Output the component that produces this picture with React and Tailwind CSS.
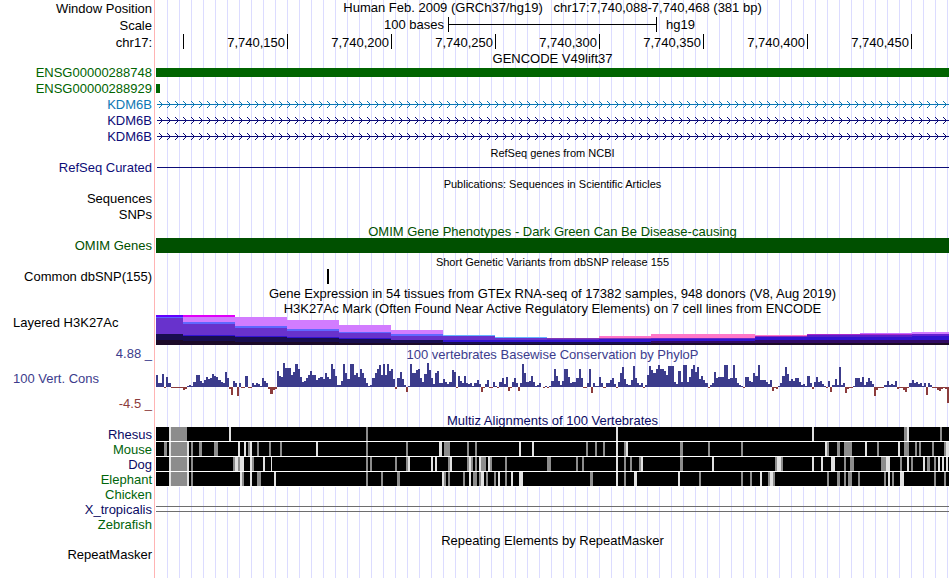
import React from 'react';
import clsx from 'clsx';

const GRID = 'bg-[repeating-linear-gradient(to_right,transparent_0_11px,#dcdcff_11px_12px)]';

const TICKS = ['7,740,150', '7,740,200', '7,740,250', '7,740,300', '7,740,350', '7,740,400', '7,740,450'];

// x start, x end, then [top, bottom, colour] bands
const H3K27AC = [
  [0, 27, [[0, 2, '#6200ff'], [2, 3, '#5c64ff'], [3, 19, '#6832cc'], [19, 25, '#190e50'], [25, 30, '#1c0a28']]],
  [27, 79, [[0, 2, '#e000f8'], [2, 7, '#d27cff'], [7, 9, '#5f68ff'], [9, 20, '#6832cc'], [20, 21, '#3214d0'], [21, 26, '#190e50'], [26, 30, '#1c0a28']]],
  [79, 131, [[2, 11, '#d27cff'], [11, 13, '#5f68ff'], [13, 21, '#6832cc'], [21, 22, '#3214d0'], [22, 27, '#190e50'], [27, 30, '#1c0a28']]],
  [131, 183, [[5, 14, '#d27cff'], [14, 16, '#5f68ff'], [16, 22, '#6832cc'], [22, 23, '#3214d0'], [23, 27, '#190e50'], [27, 30, '#1c0a28']]],
  [183, 235, [[10, 17, '#d27cff'], [17, 18, '#5f68ff'], [18, 23, '#6832cc'], [23, 24, '#3214d0'], [24, 28, '#190e50'], [28, 30, '#1c0a28']]],
  [235, 287, [[15, 19, '#d27cff'], [19, 21, '#5f68ff'], [21, 25, '#6832cc'], [25, 28, '#190e50'], [28, 30, '#1c0a28']]],
  [287, 339, [[20, 21, '#64b4ff'], [21, 25, '#6832cc'], [25, 27, '#3214d0'], [27, 29, '#190e50'], [29, 30, '#1c0a28']]],
  [339, 391, [[22, 23, '#64b4ff'], [23, 25, '#6832cc'], [25, 27, '#3214d0'], [27, 29, '#190e50'], [29, 30, '#1c0a28']]],
  [391, 443, [[23, 24, '#8238b4'], [24, 25, '#5a28c8'], [25, 27, '#3214d0'], [27, 29, '#190e50'], [29, 30, '#1c0a28']]],
  [443, 495, [[21, 23, '#ff78c8'], [23, 24, '#8238b4'], [24, 27, '#3214d0'], [27, 29, '#190e50'], [29, 30, '#1c0a28']]],
  [495, 599, [[19, 23, '#ff78c8'], [23, 24, '#6428c8'], [24, 26, '#3214d0'], [26, 28, '#320a64'], [28, 30, '#1c0a28']]],
  [599, 651, [[20, 21, '#ff78c8'], [21, 22, '#8c28be'], [22, 25, '#3214d0'], [25, 28, '#320a64'], [28, 30, '#1c0a28']]],
  [651, 704, [[19, 20, '#aa28c8'], [20, 22, '#5a1ec8'], [22, 25, '#3214d0'], [25, 28, '#320a64'], [28, 30, '#1c0a28']]],
  [704, 756, [[18, 19, '#c86eff'], [19, 20, '#aa28c8'], [20, 22, '#5a1ec8'], [22, 25, '#3214d0'], [25, 28, '#320a64'], [28, 30, '#1c0a28']]],
  [756, 793, [[17, 19, '#d27cff'], [19, 21, '#6420d0'], [21, 25, '#3214d0'], [25, 28, '#320a64'], [28, 30, '#1c0a28']]],
];

// one score per base, in pixels above or below the zero line
const PHYLOP = [
  12, 4, 4, 13, -1, 10, 4, -1, -1, -1, -1, -1, -1, -3, -2, 1, 2, 1, 5, 12,
  12, 6, 4, 7, 10, 8, 9, 13, 11, 10, 7, 5, 4, 15, 9, -2, -8, 6, 4, -9,
  4, -1, -1, 11, -1, -1, 4, 2, 4, 3, 1, 9, 6, 4, -2, -7, -3, -2, 16, 11,
  10, 24, 19, 19, 19, 12, 15, 23, 18, 10, 5, 6, 9, 12, 16, 12, 12, 7, 9, 10,
  8, 14, 10, 8, 23, 18, 11, 2, 2, 6, 23, 14, 8, 23, 23, 12, 14, 10, 18, 14,
  9, 4, 1, 2, 9, 14, 18, 22, 12, 23, 12, 23, 16, 18, 8, -2, 9, 15, 8, 2,
  -5, 1, 23, 14, 14, 17, 18, 9, 5, 13, 24, 17, 9, 3, 14, 16, 4, 4, 8, 5,
  3, 5, 17, 15, -1, 11, 6, 4, 11, 4, 3, 4, 1, 4, 7, 3, -5, -1, 3, 7,
  -1, -1, 5, 1, -1, 5, 9, 3, 10, -4, -1, 5, 9, 4, -4, 4, 23, 14, 5, 6,
  11, 5, 1, 2, 4, 0, -1, 1, -1, 1, 6, 18, 11, 6, 2, 6, 18, 18, 10, 4,
  5, 5, 9, 18, 9, -1, -1, 4, 18, -6, 4, 1, 1, 10, 4, -1, 4, 4, 7, 9,
  3, -1, 5, 14, 20, 8, 3, 2, 7, 21, 9, 4, 2, 4, -1, 2, 12, 21, 17, 14,
  18, 22, 18, 18, 16, 12, 21, 21, 21, 5, 3, 16, 5, 22, 22, 5, 10, 18, 22, 15,
  20, 8, 11, 7, 4, -1, 2, 4, 15, 9, 10, 10, 10, 22, 22, 8, 9, 22, 9, 4,
  2, 1, -1, 10, 10, 6, 5, 14, 11, 22, 7, 7, 7, 5, 3, 7, -4, -1, -2, 1,
  4, 11, 20, 13, 6, 8, 6, 9, 9, 5, 2, 3, 1, 11, 4, -2, 5, 10, 5, 6,
  3, 1, -1, 6, -5, 2, 8, 2, 20, 2, 4, -6, -2, -1, -1, 1, 9, 9, 5, 10,
  2, 5, 9, 6, 3, -9, -3, -1, -1, -1, 2, 6, 2, 3, 2, 6, -2, -1, -1, -3,
  -5, -1, 4, 7, 4, 5, 3, 4, 1, 4, -8, 4, 2, -1, -1, -3, -4, -2, -1, -2,
  -16,
];

const ALIGNMENTS = [
  {
    name: 'Rhesus',
    color: 'text-[#0a0a64]',
    light: [[13, 15], [73, 75], [460, 462], [656, 658], [751, 753]],
    gray: [[15, 31], [210, 212], [748, 751], [784, 786]],
  },
  {
    name: 'Mouse',
    color: 'text-[#00640a]',
    light: [[13, 15], [31, 33], [82, 84], [88, 90], [94, 96], [160, 162], [283, 286], [363, 365], [376, 378], [460, 462], [470, 472], [669, 671], [709, 711], [742, 744], [790, 793]],
    gray: [[8, 11], [15, 31], [35, 37], [43, 46], [58, 62], [92, 94], [101, 103], [113, 115], [124, 126], [210, 212], [250, 252], [288, 294], [311, 313], [319, 321], [430, 432], [439, 441], [447, 449], [468, 470], [524, 527], [552, 554], [585, 587], [671, 673], [681, 684], [688, 696], [721, 723], [748, 753], [759, 761], [763, 765], [776, 778], [788, 790]],
  },
  {
    name: 'Dog',
    color: 'text-[#0a0a64]',
    light: [[13, 15], [31, 33], [79, 82], [84, 88], [94, 96], [107, 109], [115, 116], [252, 254], [275, 277], [279, 281], [294, 296], [313, 315], [323, 325], [332, 334], [460, 462], [485, 487], [556, 558], [621, 625], [656, 658], [665, 667], [675, 679], [730, 734], [751, 753], [767, 769], [782, 784], [786, 788], [790, 792]],
    gray: [[15, 31], [35, 37], [77, 79], [82, 84], [96, 98], [210, 212], [214, 216], [239, 241], [250, 252], [292, 294], [311, 313], [315, 317], [319, 321], [325, 330], [334, 336], [349, 351], [391, 395], [420, 422], [426, 428], [468, 470], [474, 476], [483, 485], [524, 527], [619, 621], [625, 627], [688, 690], [694, 698], [725, 730], [744, 746], [755, 757], [771, 774], [778, 780]],
  },
  {
    name: 'Elephant',
    color: 'text-[#00640a]',
    light: [[13, 15], [31, 33], [84, 86], [94, 96], [118, 120], [286, 288], [313, 315], [325, 328], [342, 344], [355, 357], [363, 367], [460, 462], [478, 481], [522, 524], [604, 606], [614, 617], [732, 734], [744, 748]],
    gray: [[15, 31], [35, 37], [86, 88], [101, 105], [210, 212], [225, 227], [241, 244], [288, 290], [292, 294], [307, 309], [317, 321], [323, 325], [330, 332], [338, 340], [349, 351], [434, 437], [468, 470], [543, 545], [585, 587], [594, 596], [612, 614], [617, 619], [671, 673], [681, 684], [688, 690], [692, 696], [702, 704], [728, 730], [736, 738], [778, 780], [788, 790]],
  },
];

const Row = ({ label, height = 'h-4', labelClass = '', children }) => (
  <div className={clsx('flex', height)}>
    <div className={clsx('mr-px w-[155px] shrink-0 border-r border-[#ffb4b4] pr-[2px] text-right', labelClass)}>{label}</div>
    <div className={clsx('min-w-0 flex-1', GRID)}>{children}</div>
  </div>
);

const TitleRow = ({ title, height = 'h-[15px]', titleClass = '', ...rest }) => (
  <Row height={height} {...rest}>
    <h2 className={clsx('text-center whitespace-pre', titleClass)}>{title}</h2>
  </Row>
);

const Plot = ({ height, className, children }) => (
  <svg viewBox={`0 0 793 ${height}`} preserveAspectRatio="none" shapeRendering="crispEdges" className={clsx('block w-full', className)}>
    {children}
  </svg>
);

const ARROWS = Array.from({ length: 99 }, (_, i) => {
  const x = 3 + i * 8;
  return `M${x} 4h1v1h1v1h1v1h1v1h-1v1h-1v1h-1v1h-1v-1h1v-1h1v-1h1v-1h-1v-1h-1v-1h-1z`;
}).join('');

const GeneRow = ({ labelClass, color }) => (
  <Row label="KDM6B" labelClass={labelClass}>
    <Plot height={16} className="h-4">
      <path d={`M1 7h792v1h-792z${ARROWS}`} fill={color} />
    </Plot>
  </Row>
);

const bars = (sign) =>
  PHYLOP.map((v, i) => {
    if (v * sign <= 0) return '';
    const x0 = Math.round((i * 793) / 381);
    const x1 = Math.round(((i + 1) * 793) / 381);
    return v > 0 ? `M${x0} ${24 - v}H${x1}V24H${x0}z` : `M${x0} 24H${x1}V${24 - v}H${x0}z`;
  }).join('');

const blocks = (spans) => spans.map(([a, b]) => `M${a} 0H${b}V14H${a}z`).join('');

export default function App() {
  return (
    <main className="bg-white pr-px font-['Liberation_Sans',Arial,sans-serif] text-[13px] leading-[15px] text-black">
      <TitleRow label="Window Position" height="h-[17px]" labelClass="pt-px" title="Human Feb. 2009 (GRCh37/hg19)   chr17:7,740,088-7,740,468 (381 bp)" />
      <Row label="Scale" height="h-[17px]" labelClass="pt-px">
        <div className="grid grid-cols-[292fr_209fr_292fr]">
          <span className="pr-1 text-right">100 bases</span>
          <div className="flex h-[15px] items-center border-x border-black">
            <div className="h-px w-full bg-black" />
          </div>
          <span className="pl-[9px]">hg19</span>
        </div>
      </Row>
      <Row label="chr17:" height="h-[17px]" labelClass="pt-px">
        <div className="grid grid-cols-[28fr_repeat(7,104fr)_37fr]">
          <div className="h-[15px] border-r border-black" />
          {TICKS.map((tick) => (
            <div key={tick} className="h-[15px] border-r border-black pr-[2px] text-right leading-[17px]">{tick}</div>
          ))}
        </div>
      </Row>

      <TitleRow title="GENCODE V49lift37" height="h-[14px]" />
      <Row label="ENSG00000288748" labelClass="text-[#006400]">
        <div className="pt-[3px]"><div className="h-[9px] bg-[#006400]" /></div>
      </Row>
      <Row label="ENSG00000288929" labelClass="text-[#006400]">
        <div className="pt-[3px]"><div className="h-[9px] w-1 bg-[#006400]" /></div>
      </Row>
      <GeneRow labelClass="text-[#0c78b4]" color="#0c78b4" />
      <GeneRow labelClass="text-[#0c0c78]" color="#0c0c78" />
      <GeneRow labelClass="text-[#0c0c78]" color="#0c0c78" />

      <TitleRow title="RefSeq genes from NCBI" titleClass="text-[11px] leading-4" />
      <Row label="RefSeq Curated" height="h-[15px]" labelClass="text-[#0c0c78]">
        <div className="pt-[7px] pl-px"><div className="h-px bg-[#0c0c78]" /></div>
      </Row>

      <TitleRow title="Publications: Sequences in Scientific Articles" height="h-4" titleClass="text-[11px] leading-[18px]" />
      <Row label="Sequences" />
      <Row label="SNPs" />

      <TitleRow title="OMIM Gene Phenotypes - Dark Green Can Be Disease-causing" titleClass="pt-px text-[#005000]" />
      <Row label="OMIM Genes" height="h-[15px]" labelClass="text-[#005000]">
        <div className="h-full bg-[#005000]" />
      </Row>

      <TitleRow title="Short Genetic Variants from dbSNP release 155" height="h-4" titleClass="text-[11px] leading-[18px]" />
      <Row label="Common dbSNP(155)">
        <Plot height={15} className="h-[15px]">
          <path d="M171 0h2v15h-2z" />
        </Plot>
      </Row>

      <TitleRow title="Gene Expression in 54 tissues from GTEx RNA-seq of 17382 samples, 948 donors (V8, Aug 2019)" titleClass="pt-px" />
      <TitleRow title="H3K27Ac Mark (Often Found Near Active Regulatory Elements) on 7 cell lines from ENCODE" titleClass="pt-px" />
      <Row label={<p className="pl-[13px] text-left">Layered H3K27Ac</p>} height="h-[30px]">
        <Plot height={30} className="h-[30px]">
          {H3K27AC.map(([x0, x1, bands]) =>
            bands.map(([top, bottom, fill]) => (
              <rect key={`${x0}-${top}`} x={x0} y={top} width={x1 - x0} height={bottom - top} fill={fill} />
            ))
          )}
        </Plot>
      </Row>

      <TitleRow
        label="4.88 _"
        height="h-[18px]"
        labelClass="pt-px text-[#3c3c8c]"
        title="100 vertebrates Basewise Conservation by PhyloP"
        titleClass="pt-[2px] text-[#3c3c8c]"
      />
      <Row
        height="h-[49px]"
        label={
          <div className="flex flex-col gap-[10px] pt-2">
            <p className="pl-[13px] text-left text-[#3c3c8c]">100 Vert. Cons</p>
            <p className="text-[#8c3c3c]">-4.5 _</p>
          </div>
        }
      >
        <Plot height={49} className="h-[49px]">
          <path d={bars(1)} fill="#3c3c8c" />
          <path d={bars(-1)} fill="#8c3c3c" />
        </Plot>
      </Row>

      <TitleRow title="Multiz Alignments of 100 Vertebrates" titleClass="pt-px text-[#0a0a64]" />
      {ALIGNMENTS.map((species) => (
        <Row key={species.name} label={species.name} height="h-[15px]" labelClass={species.color}>
          <Plot height={15} className="h-[15px] bg-white">
            <path d="M0 0H793V14H0z" />
            <path d={blocks(species.gray)} fill="#8c8c8c" />
            <path d={blocks(species.light)} fill="#e1e1e1" />
          </Plot>
        </Row>
      ))}
      <Row label="Chicken" height="h-[15px]" labelClass="text-[#00640a]" />
      <Row label="X_tropicalis" height="h-[15px]" labelClass="text-[#0a0a64]">
        <div className="pt-1"><div className="h-[6px] border-y border-[#6e6e6e]" /></div>
      </Row>
      <Row label="Zebrafish" height="h-[15px]" labelClass="text-[#00640a]" />

      <TitleRow title="Repeating Elements by RepeatMasker" titleClass="pt-px" />
      <Row label="RepeatMasker" height="h-[31px]" />
    </main>
  );
}
